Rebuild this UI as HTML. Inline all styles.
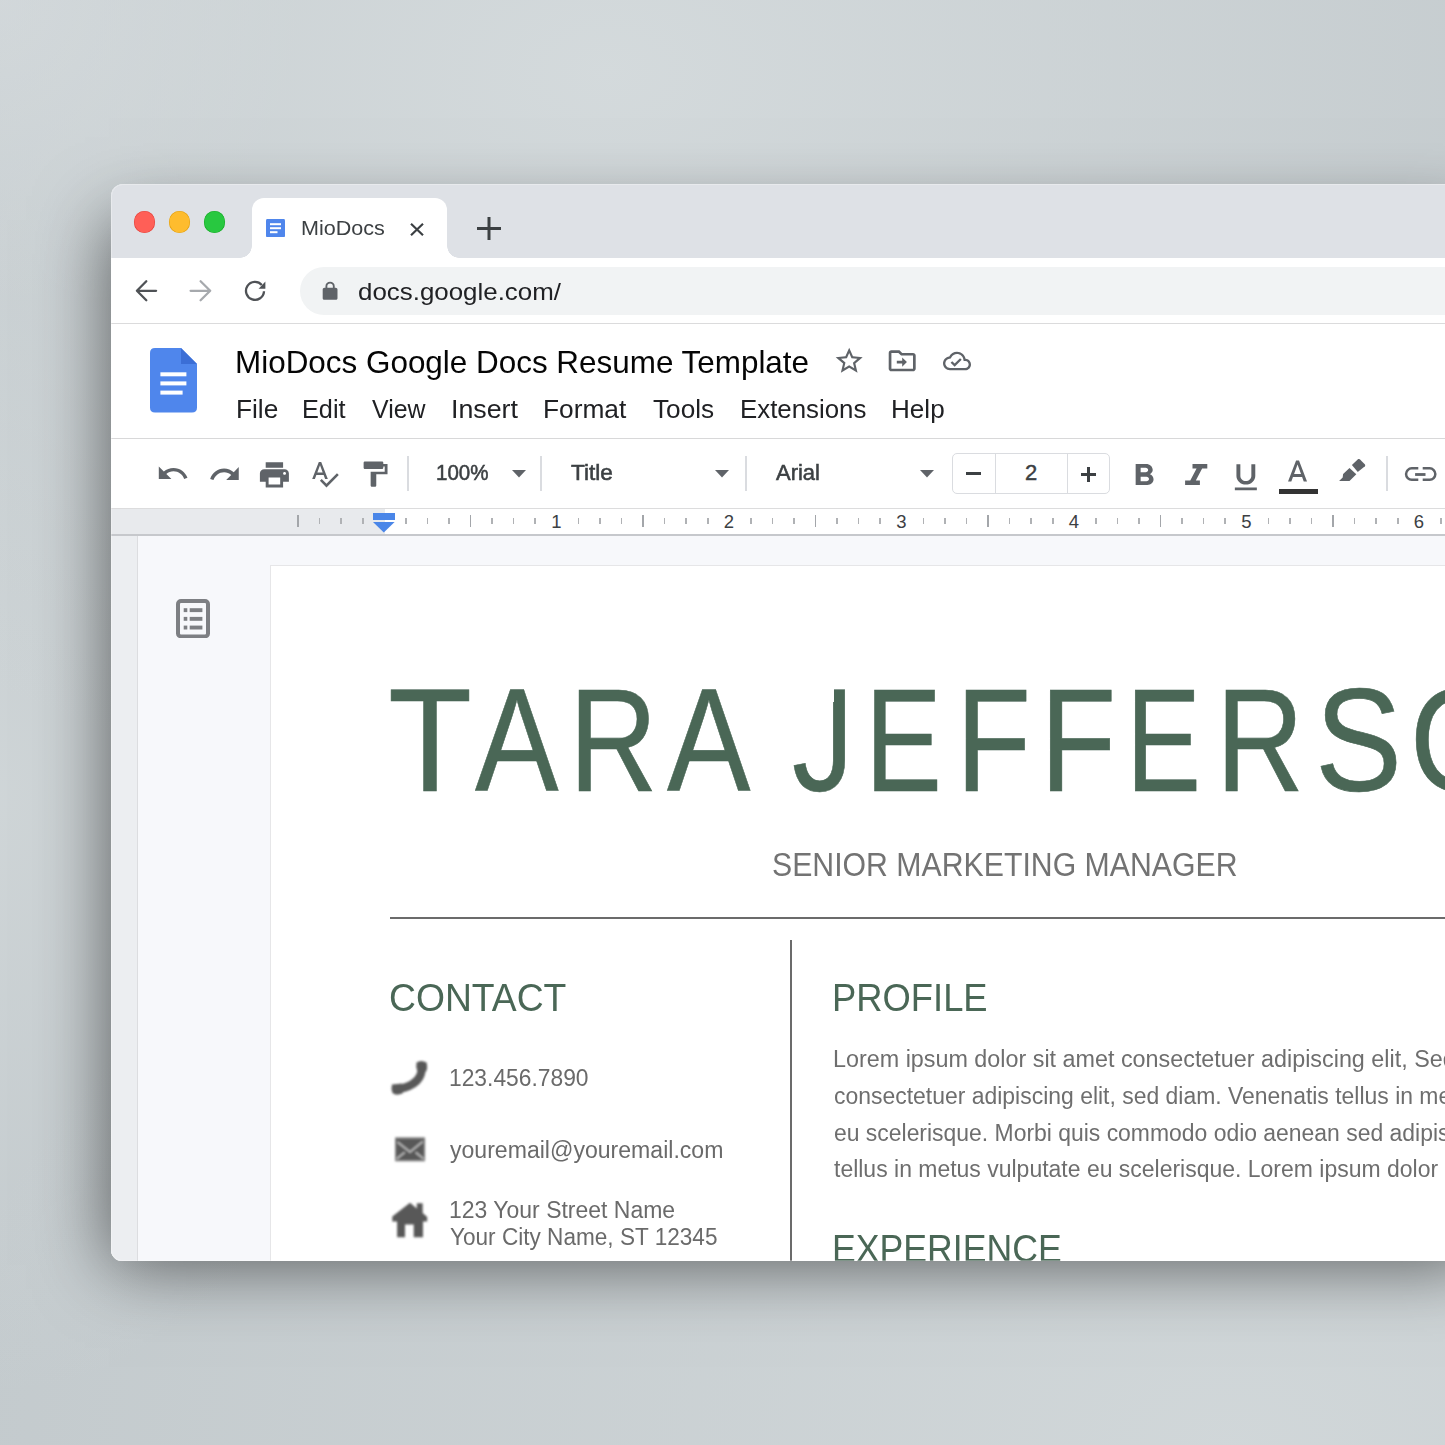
<!DOCTYPE html>
<html><head><meta charset="utf-8"><style>
html,body{margin:0;padding:0;}
body{width:1445px;height:1445px;overflow:hidden;position:relative;font-family:"Liberation Sans", sans-serif;
background:
 radial-gradient(ellipse 1100px 750px at 42% 5%, rgba(214,220,222,0.88), rgba(214,220,222,0) 100%),
 radial-gradient(ellipse 300px 300px at 0% 0%, rgba(212,217,220,0.7), rgba(212,217,220,0) 100%),
 radial-gradient(ellipse 1300px 800px at 85% 100%, rgba(211,217,219,0.85), rgba(211,217,219,0) 100%),
 radial-gradient(ellipse 400px 600px at 0% 55%, rgba(210,216,218,0.8), rgba(210,216,218,0) 100%),
 #c3cacd;}
#win{position:absolute;left:111px;top:184px;width:1400px;height:1077px;border-radius:12px 0 0 11px;overflow:hidden;background:#fff;
box-shadow:-18px 20px 68px -16px rgba(0,0,0,0.56);}
</style></head><body>
<div id="win">
<div style="position:absolute;left:0.00px;top:0.00px;width:1354.00px;height:73.50px;background:#dee1e6;"></div>
<div style="position:absolute;left:22.90px;top:27.40px;width:21.2px;height:21.2px;border-radius:50%;background:#ff5f57;box-shadow:inset 0 0 0 0.6px #e2463f;"></div>
<div style="position:absolute;left:57.90px;top:27.40px;width:21.2px;height:21.2px;border-radius:50%;background:#febc2e;box-shadow:inset 0 0 0 0.6px #e1a116;"></div>
<div style="position:absolute;left:92.90px;top:27.40px;width:21.2px;height:21.2px;border-radius:50%;background:#28c840;box-shadow:inset 0 0 0 0.6px #1aab29;"></div>
<div style="position:absolute;left:140.60px;top:14.00px;width:195.40px;height:60.00px;background:#fff;border-radius:12px 12px 0 0;"></div>
<div style="position:absolute;left:128.6px;top:61.5px;width:12px;height:12px;background:radial-gradient(circle at 0 0, transparent 11.5px, #fff 12px);"></div>
<div style="position:absolute;left:336px;top:61.5px;width:12px;height:12px;background:radial-gradient(circle at 100% 0, transparent 11.5px, #fff 12px);"></div>
<svg style="position:absolute;left:154.60px;top:34.70px;" width="19.00" height="18.30" viewBox="0 0 19 18.3"><rect x="0" y="0" width="19" height="18.3" rx="1.5" fill="#4f86ec"/><rect x="4" y="4.2" width="11" height="2" fill="#fff"/><rect x="4" y="8.2" width="11" height="2" fill="#fff"/><rect x="4" y="12.2" width="7.5" height="2" fill="#fff"/></svg>
<div style="position:absolute;left:189.52px;top:34.27px;font-size:20px;line-height:20px;font-weight:400;color:#3c4043;white-space:nowrap;transform:scaleX(1.0782);transform-origin:0 0;">MioDocs</div>
<svg style="position:absolute;left:299.00px;top:38.50px;" width="14.00" height="13.00" viewBox="0 0 14 13"><path d="M1 0.8 L13 12.2 M13 0.8 L1 12.2" stroke="#3c4043" stroke-width="2.2"/></svg>
<svg style="position:absolute;left:366.00px;top:33.00px;" width="24.00" height="23.00" viewBox="0 0 24 23"><path d="M12 0 V23 M0 11.5 H24" stroke="#3c4043" stroke-width="3"/></svg>
<div style="position:absolute;left:0.00px;top:73.50px;width:1354.00px;height:65.50px;background:#fff;"></div>
<div style="position:absolute;left:0.00px;top:138.80px;width:1354.00px;height:1.50px;background:#dbdbdc;"></div>
<div style="position:absolute;left:189.00px;top:83.00px;width:1200.00px;height:48.00px;background:#f1f3f4;border-radius:24px;"></div>
<svg style="position:absolute;left:14.00px;top:86.00px;" width="150.00" height="42.00" viewBox="125 270 150 42"><path d="M156.1 290.8 H137.2 M146.3 281.2 L136.9 290.8 L146.3 300.3" stroke="#4f5256" stroke-width="2.3" fill="none" stroke-linecap="round" stroke-linejoin="round"/><path d="M190.6 290.8 H209.8 M200.6 281.2 L210.2 290.8 L200.6 300.3" stroke="#a6a9ad" stroke-width="2.3" fill="none" stroke-linecap="round" stroke-linejoin="round"/><path d="M261.8 285.0 A9 9 0 1 0 264 291.3" stroke="#4f5256" stroke-width="2.3" fill="none"/><path d="M258.6 288.8 L265.4 288.8 L265.4 281.6 Z" fill="#4f5256"/></svg>
<svg style="position:absolute;left:207.50px;top:96.84px" width="22.20" height="20.57" viewBox="0 0 24 24" preserveAspectRatio="none"><path fill="#5f6368" d="M18 8h-1V6c0-2.76-2.24-5-5-5S7 3.24 7 6v2H6c-1.1 0-2 .9-2 2v10c0 1.1.9 2 2 2h12c1.1 0 2-.9 2-2V10c0-1.1-.9-2-2-2zM9 6c0-1.66 1.34-3 3-3s3 1.34 3 3v2H9V6z"/></svg>
<div style="position:absolute;left:246.84px;top:95.66px;font-size:24.5px;line-height:24.5px;font-weight:400;color:#202124;white-space:nowrap;transform:scaleX(1.0569);transform-origin:0 0;">docs.google.com/</div>
<div style="position:absolute;left:0.00px;top:140.30px;width:1354.00px;height:113.70px;background:#fff;"></div>
<div style="position:absolute;left:0.00px;top:254.00px;width:1354.00px;height:1.20px;background:#d8d8d9;"></div>
<svg style="position:absolute;left:39.00px;top:164.00px;" width="47.00" height="64.50" viewBox="0 0 47 64.5"><path d="M5 0 H31 L47 16 V59.5 Q47 64.5 42 64.5 H5 Q0 64.5 0 59.5 V5 Q0 0 5 0Z" fill="#4f86ec"/><path d="M31 0 L47 16 H31Z" fill="#3b6ed6"/><rect x="10.4" y="24.3" width="26" height="4" fill="#fff"/><rect x="10.4" y="33.4" width="26" height="4" fill="#fff"/><rect x="10.4" y="42.6" width="22.2" height="4" fill="#fff"/></svg>
<div style="position:absolute;left:123.79px;top:162.50px;font-size:31.3px;line-height:31.3px;font-weight:400;color:#050505;white-space:nowrap;transform:scaleX(1.0041);transform-origin:0 0;">MioDocs Google Docs Resume Template</div>
<svg style="position:absolute;left:722.30px;top:161.37px" width="32.40" height="31.58" viewBox="0 0 24 24" preserveAspectRatio="none"><path fill="#5f6368" d="M22 9.24l-7.19-.62L12 2 9.19 8.63 2 9.24l5.46 4.73L5.82 21 12 17.27 18.18 21l-1.63-7.03L22 9.24zM12 15.4l-3.76 2.27 1-4.28-3.32-2.88 4.38-.38L12 6.1l1.71 4.04 4.38.38-3.32 2.88 1 4.28L12 15.4z"/></svg>
<svg style="position:absolute;left:775.30px;top:160.75px" width="32.40" height="31.50" viewBox="0 0 24 24" preserveAspectRatio="none"><path fill="#5f6368" d="M20 6h-8l-2-2H4c-1.1 0-1.99.9-1.99 2L2 18c0 1.1.9 2 2 2h16c1.1 0 2-.9 2-2V8c0-1.1-.9-2-2-2zm0 12H4V6h5.17l2 2H20v10zM12 14H8v-2h4V9.5l3.5 3.5-3.5 3.5z"/></svg>
<svg style="position:absolute;left:832.00px;top:162.93px" width="28.00" height="28.05" viewBox="0 0 24 24" preserveAspectRatio="none"><path fill="#5f6368" d="M19.35 10.04C18.67 6.59 15.64 4 12 4 9.11 4 6.6 5.64 5.35 8.04 2.34 8.36 0 10.91 0 14c0 3.31 2.69 6 6 6h13c2.76 0 5-2.24 5-5 0-2.64-2.05-4.78-4.65-4.96zM19 18H6c-2.21 0-4-1.79-4-4 0-2.05 1.53-3.76 3.56-3.97l1.07-.11.5-.95C8.08 7.14 9.94 6 12 6c2.62 0 4.88 1.86 5.39 4.43l.3 1.5 1.53.11c1.56.1 2.78 1.41 2.78 2.96 0 1.65-1.35 3-3 3zm-9-3.82l-2.09-2.09L6.5 13.5 10 17l6.01-6.01-1.41-1.41z"/></svg>
<div style="position:absolute;left:124.53px;top:212.58px;font-size:25.3px;line-height:25.3px;font-weight:400;color:#202124;white-space:nowrap;transform:scaleX(1.0373);transform-origin:0 0;">File</div>
<div style="position:absolute;left:190.50px;top:212.58px;font-size:25.3px;line-height:25.3px;font-weight:400;color:#202124;white-space:nowrap;transform:scaleX(0.9985);transform-origin:0 0;">Edit</div>
<div style="position:absolute;left:260.80px;top:212.58px;font-size:25.3px;line-height:25.3px;font-weight:400;color:#202124;white-space:nowrap;transform:scaleX(0.9836);transform-origin:0 0;">View</div>
<div style="position:absolute;left:340.08px;top:212.58px;font-size:25.3px;line-height:25.3px;font-weight:400;color:#202124;white-space:nowrap;transform:scaleX(1.0582);transform-origin:0 0;">Insert</div>
<div style="position:absolute;left:431.72px;top:212.58px;font-size:25.3px;line-height:25.3px;font-weight:400;color:#202124;white-space:nowrap;transform:scaleX(1.0399);transform-origin:0 0;">Format</div>
<div style="position:absolute;left:542.00px;top:212.58px;font-size:25.3px;line-height:25.3px;font-weight:400;color:#202124;white-space:nowrap;transform:scaleX(1.0359);transform-origin:0 0;">Tools</div>
<div style="position:absolute;left:628.56px;top:212.58px;font-size:25.3px;line-height:25.3px;font-weight:400;color:#202124;white-space:nowrap;transform:scaleX(1.0215);transform-origin:0 0;">Extensions</div>
<div style="position:absolute;left:779.64px;top:212.58px;font-size:25.3px;line-height:25.3px;font-weight:400;color:#202124;white-space:nowrap;transform:scaleX(1.0315);transform-origin:0 0;">Help</div>
<div style="position:absolute;left:0.00px;top:255.20px;width:1354.00px;height:68.30px;background:#fff;"></div>
<div style="position:absolute;left:0.00px;top:323.80px;width:1354.00px;height:1.20px;background:#dcdcdd;"></div>
<svg style="position:absolute;left:45.00px;top:273.42px" width="33.60" height="32.84" viewBox="0 0 24 24" preserveAspectRatio="none"><path fill="#5f6368" d="M12.5 8c-2.65 0-5.05.99-6.9 2.6L2 7v9h9l-3.62-3.62c1.39-1.16 3.16-1.88 5.12-1.88 3.54 0 6.55 2.31 7.6 5.5l2.37-.78C21.08 11.03 17.15 8 12.5 8z"/></svg>
<svg style="position:absolute;left:96.65px;top:272.89px" width="33.55" height="34.67" viewBox="0 0 24 24" preserveAspectRatio="none"><path fill="#5f6368" d="M18.4 10.6C16.55 8.99 14.15 8 11.5 8c-4.65 0-8.58 3.03-9.96 7.22L3.9 16c1.05-3.19 4.05-5.5 7.6-5.5 1.95 0 3.73.72 5.12 1.88L13 16h9V7l-3.6 3.6z"/></svg>
<svg style="position:absolute;left:145.90px;top:273.50px" width="34.80" height="33.60" viewBox="0 0 24 24" preserveAspectRatio="none"><path fill="#5f6368" d="M19 8H5c-1.66 0-3 1.34-3 3v6h4v4h12v-4h4v-6c0-1.66-1.34-3-3-3zm-3 11H8v-5h8v5zm3-7c-.55 0-1-.45-1-1s.45-1 1-1 1 .45 1 1-.45 1-1 1zm-1-9H6v4h12V3z"/></svg>
<svg style="position:absolute;left:197.81px;top:274.08px" width="31.08" height="31.38" viewBox="0 0 24 24" preserveAspectRatio="none"><path fill="#5f6368" d="M12.45 16h2.09L9.43 3H7.57L2.46 16h2.09l1.12-3h5.64l1.14 3zm-6.02-5L8.5 5.48 10.57 11H6.43zm15.16.59l-8.09 8.09L9.83 16l-1.41 1.41 5.09 5.09L23 13l-1.41-1.41z"/></svg>
<svg style="position:absolute;left:247.18px;top:275.17px" width="33.74" height="30.36" viewBox="0 0 24 24" preserveAspectRatio="none"><path fill="#5f6368" d="M18 4V3c0-.55-.45-1-1-1H5c-.55 0-1 .45-1 1v4c0 .55.45 1 1 1h12c.55 0 1-.45 1-1V6h1v4H9v11c0 .55.45 1 1 1h2c.55 0 1-.45 1-1v-9h8V4h-3z"/></svg>
<div style="position:absolute;left:296.40px;top:272.00px;width:1.50px;height:35.00px;background:#dadce0;"></div>
<div style="position:absolute;left:429.40px;top:272.00px;width:1.50px;height:35.00px;background:#dadce0;"></div>
<div style="position:absolute;left:634.40px;top:272.00px;width:1.50px;height:35.00px;background:#dadce0;"></div>
<div style="position:absolute;left:1275.40px;top:272.00px;width:1.50px;height:35.00px;background:#dadce0;"></div>
<div style="position:absolute;left:325.07px;top:277.78px;font-size:22px;line-height:22px;font-weight:400;color:#3c4043;white-space:nowrap;transform:scaleX(0.9323);transform-origin:0 0;-webkit-text-stroke:0.55px #3c4043;">100%</div>
<div style="position:absolute;left:460.40px;top:277.78px;font-size:22px;line-height:22px;font-weight:400;color:#3c4043;white-space:nowrap;transform:scaleX(1.0269);transform-origin:0 0;-webkit-text-stroke:0.55px #3c4043;">Title</div>
<div style="position:absolute;left:665.00px;top:277.78px;font-size:22px;line-height:22px;font-weight:400;color:#3c4043;white-space:nowrap;transform:scaleX(0.9971);transform-origin:0 0;-webkit-text-stroke:0.55px #3c4043;">Arial</div>
<svg style="position:absolute;left:400.60px;top:286.40px;" width="14.00" height="7.50" viewBox="0 0 14 7.5"><path d="M0 0 H14 L7 7.5Z" fill="#5f6368"/></svg>
<svg style="position:absolute;left:604.00px;top:286.40px;" width="14.00" height="7.50" viewBox="0 0 14 7.5"><path d="M0 0 H14 L7 7.5Z" fill="#5f6368"/></svg>
<svg style="position:absolute;left:809.00px;top:286.40px;" width="14.00" height="7.50" viewBox="0 0 14 7.5"><path d="M0 0 H14 L7 7.5Z" fill="#5f6368"/></svg>
<div style="position:absolute;left:841.00px;top:268.50px;width:158.00px;height:41.50px;border:1.3px solid #dadce0;border-radius:5px;box-sizing:border-box;"></div>
<div style="position:absolute;left:884.00px;top:268.50px;width:1.30px;height:41.50px;background:#dadce0;"></div>
<div style="position:absolute;left:956.00px;top:268.50px;width:1.30px;height:41.50px;background:#dadce0;"></div>
<div style="position:absolute;left:855.00px;top:288.20px;width:15.00px;height:3.00px;background:#3c4043;"></div>
<svg style="position:absolute;left:970.00px;top:282.50px;" width="15.00" height="15.00" viewBox="0 0 15 15"><path d="M7.5 0 V15 M0 7.5 H15" stroke="#3c4043" stroke-width="3"/></svg>
<div style="position:absolute;left:914.00px;top:277.78px;font-size:22px;line-height:22px;font-weight:400;color:#3c4043;white-space:nowrap;-webkit-text-stroke:0.45px #3c4043;">2</div>
<svg style="position:absolute;left:1013.14px;top:273.90px" width="39.96" height="36.00" viewBox="0 0 24 24" preserveAspectRatio="none"><path fill="#5f6368" d="M15.6 10.79c.97-.67 1.65-1.77 1.65-2.79 0-2.26-1.75-4-4-4H7v14h7.04c2.09 0 3.71-1.7 3.71-3.79 0-1.52-.86-2.82-2.15-3.42zM10 6.5h3c.83 0 1.5.67 1.5 1.5s-.67 1.5-1.5 1.5h-3v-3zm3.5 9H10v-3h3.5c.83 0 1.5.67 1.5 1.5s-.67 1.5-1.5 1.5z"/></svg>
<svg style="position:absolute;left:1062.70px;top:273.90px" width="44.40" height="36.00" viewBox="0 0 24 24" preserveAspectRatio="none"><path fill="#5f6368" d="M10 4v3h2.21l-3.42 8H6v3h8v-3h-2.21l3.42-8H18V4z"/></svg>
<svg style="position:absolute;left:1116.14px;top:275.67px" width="37.71" height="34.67" viewBox="0 0 24 24" preserveAspectRatio="none"><path fill="#5f6368" d="M12 17c3.31 0 6-2.69 6-6V3h-2.5v8c0 1.93-1.57 3.5-3.5 3.5S8.5 12.93 8.5 11V3H6v8c0 3.31 2.69 6 6 6zm-7 2v2h14v-2H5z"/></svg>
<svg style="position:absolute;left:1168.96px;top:271.50px" width="35.08" height="36.00" viewBox="0 0 24 24" preserveAspectRatio="none"><path fill="#5f6368" d="M11 3L5.5 17h2.25l1.12-3h6.25l1.12 3h2.25L13 3h-2zm-1.38 9L12 5.67 14.38 12H9.62z"/></svg>
<div style="position:absolute;left:1167.60px;top:304.50px;width:39.20px;height:5.90px;background:#333;"></div>
<svg style="position:absolute;left:1219.00px;top:266.00px;" width="40.00" height="40.00" viewBox="1330 450 40 40"><path d="M1358.2 459.1 Q1359 458.6 1359.8 459.3 L1365 464.6 Q1365.6 465.5 1364.9 466.3 L1357.8 471.9 L1351.9 465.1 Z" fill="#5f6368"/><path d="M1349.5 467.9 L1356.3 474.3 L1349.5 481 L1339.1 481 L1342.7 477.4 L1343.1 473.9 Z" fill="#5f6368"/></svg>
<svg style="position:absolute;left:1284.00px;top:271.00px;" width="50.00" height="35.00" viewBox="1395 455 50 35"><path d="M1418.3 468.35 H1411.75 A5.7 5.7 0 0 0 1411.75 479.75 H1418.3 M1422.7 468.35 H1429.65 A5.7 5.7 0 0 1 1429.65 479.75 H1422.7" stroke="#5f6368" stroke-width="2.5" fill="none"/><rect x="1415.1" y="473.1" width="10.4" height="2.8" fill="#5f6368"/></svg>
<div style="position:absolute;left:0.00px;top:324.50px;width:1354.00px;height:25.50px;background:#fff;"></div>
<div style="position:absolute;left:0.00px;top:324.50px;width:274.00px;height:25.50px;background:#e8eaed;"></div>
<div style="position:absolute;left:0.00px;top:350.00px;width:1354.00px;height:1.60px;background:#c6c8cc;"></div>
<div style="position:absolute;left:186.25px;top:330.50px;width:1.60px;height:12.50px;background:#a3a6aa;"></div>
<div style="position:absolute;left:207.81px;top:334.00px;width:1.60px;height:6.00px;background:#b0b2b5;"></div>
<div style="position:absolute;left:229.38px;top:334.00px;width:1.60px;height:6.00px;background:#b0b2b5;"></div>
<div style="position:absolute;left:250.94px;top:334.00px;width:1.60px;height:6.00px;background:#b0b2b5;"></div>
<div style="position:absolute;left:294.06px;top:334.00px;width:1.60px;height:6.00px;background:#b0b2b5;"></div>
<div style="position:absolute;left:315.62px;top:334.00px;width:1.60px;height:6.00px;background:#b0b2b5;"></div>
<div style="position:absolute;left:337.19px;top:334.00px;width:1.60px;height:6.00px;background:#b0b2b5;"></div>
<div style="position:absolute;left:358.75px;top:330.50px;width:1.60px;height:12.50px;background:#a3a6aa;"></div>
<div style="position:absolute;left:380.31px;top:334.00px;width:1.60px;height:6.00px;background:#b0b2b5;"></div>
<div style="position:absolute;left:401.88px;top:334.00px;width:1.60px;height:6.00px;background:#b0b2b5;"></div>
<div style="position:absolute;left:423.44px;top:334.00px;width:1.60px;height:6.00px;background:#b0b2b5;"></div>
<div style="position:absolute;left:466.56px;top:334.00px;width:1.60px;height:6.00px;background:#b0b2b5;"></div>
<div style="position:absolute;left:488.12px;top:334.00px;width:1.60px;height:6.00px;background:#b0b2b5;"></div>
<div style="position:absolute;left:509.69px;top:334.00px;width:1.60px;height:6.00px;background:#b0b2b5;"></div>
<div style="position:absolute;left:531.25px;top:330.50px;width:1.60px;height:12.50px;background:#a3a6aa;"></div>
<div style="position:absolute;left:552.81px;top:334.00px;width:1.60px;height:6.00px;background:#b0b2b5;"></div>
<div style="position:absolute;left:574.38px;top:334.00px;width:1.60px;height:6.00px;background:#b0b2b5;"></div>
<div style="position:absolute;left:595.94px;top:334.00px;width:1.60px;height:6.00px;background:#b0b2b5;"></div>
<div style="position:absolute;left:639.06px;top:334.00px;width:1.60px;height:6.00px;background:#b0b2b5;"></div>
<div style="position:absolute;left:660.62px;top:334.00px;width:1.60px;height:6.00px;background:#b0b2b5;"></div>
<div style="position:absolute;left:682.19px;top:334.00px;width:1.60px;height:6.00px;background:#b0b2b5;"></div>
<div style="position:absolute;left:703.75px;top:330.50px;width:1.60px;height:12.50px;background:#a3a6aa;"></div>
<div style="position:absolute;left:725.31px;top:334.00px;width:1.60px;height:6.00px;background:#b0b2b5;"></div>
<div style="position:absolute;left:746.88px;top:334.00px;width:1.60px;height:6.00px;background:#b0b2b5;"></div>
<div style="position:absolute;left:768.44px;top:334.00px;width:1.60px;height:6.00px;background:#b0b2b5;"></div>
<div style="position:absolute;left:811.56px;top:334.00px;width:1.60px;height:6.00px;background:#b0b2b5;"></div>
<div style="position:absolute;left:833.12px;top:334.00px;width:1.60px;height:6.00px;background:#b0b2b5;"></div>
<div style="position:absolute;left:854.69px;top:334.00px;width:1.60px;height:6.00px;background:#b0b2b5;"></div>
<div style="position:absolute;left:876.25px;top:330.50px;width:1.60px;height:12.50px;background:#a3a6aa;"></div>
<div style="position:absolute;left:897.81px;top:334.00px;width:1.60px;height:6.00px;background:#b0b2b5;"></div>
<div style="position:absolute;left:919.38px;top:334.00px;width:1.60px;height:6.00px;background:#b0b2b5;"></div>
<div style="position:absolute;left:940.94px;top:334.00px;width:1.60px;height:6.00px;background:#b0b2b5;"></div>
<div style="position:absolute;left:984.06px;top:334.00px;width:1.60px;height:6.00px;background:#b0b2b5;"></div>
<div style="position:absolute;left:1005.62px;top:334.00px;width:1.60px;height:6.00px;background:#b0b2b5;"></div>
<div style="position:absolute;left:1027.19px;top:334.00px;width:1.60px;height:6.00px;background:#b0b2b5;"></div>
<div style="position:absolute;left:1048.75px;top:330.50px;width:1.60px;height:12.50px;background:#a3a6aa;"></div>
<div style="position:absolute;left:1070.31px;top:334.00px;width:1.60px;height:6.00px;background:#b0b2b5;"></div>
<div style="position:absolute;left:1091.88px;top:334.00px;width:1.60px;height:6.00px;background:#b0b2b5;"></div>
<div style="position:absolute;left:1113.44px;top:334.00px;width:1.60px;height:6.00px;background:#b0b2b5;"></div>
<div style="position:absolute;left:1156.56px;top:334.00px;width:1.60px;height:6.00px;background:#b0b2b5;"></div>
<div style="position:absolute;left:1178.12px;top:334.00px;width:1.60px;height:6.00px;background:#b0b2b5;"></div>
<div style="position:absolute;left:1199.69px;top:334.00px;width:1.60px;height:6.00px;background:#b0b2b5;"></div>
<div style="position:absolute;left:1221.25px;top:330.50px;width:1.60px;height:12.50px;background:#a3a6aa;"></div>
<div style="position:absolute;left:1242.81px;top:334.00px;width:1.60px;height:6.00px;background:#b0b2b5;"></div>
<div style="position:absolute;left:1264.38px;top:334.00px;width:1.60px;height:6.00px;background:#b0b2b5;"></div>
<div style="position:absolute;left:1285.94px;top:334.00px;width:1.60px;height:6.00px;background:#b0b2b5;"></div>
<div style="position:absolute;left:1329.06px;top:334.00px;width:1.60px;height:6.00px;background:#b0b2b5;"></div>
<div style="position:absolute;left:440.30px;top:328.84px;font-size:18.5px;line-height:18.5px;font-weight:400;color:#3c4043;white-space:nowrap;">1</div>
<div style="position:absolute;left:612.80px;top:328.84px;font-size:18.5px;line-height:18.5px;font-weight:400;color:#3c4043;white-space:nowrap;">2</div>
<div style="position:absolute;left:785.30px;top:328.84px;font-size:18.5px;line-height:18.5px;font-weight:400;color:#3c4043;white-space:nowrap;">3</div>
<div style="position:absolute;left:957.80px;top:328.84px;font-size:18.5px;line-height:18.5px;font-weight:400;color:#3c4043;white-space:nowrap;">4</div>
<div style="position:absolute;left:1130.30px;top:328.84px;font-size:18.5px;line-height:18.5px;font-weight:400;color:#3c4043;white-space:nowrap;">5</div>
<div style="position:absolute;left:1302.80px;top:328.84px;font-size:18.5px;line-height:18.5px;font-weight:400;color:#3c4043;white-space:nowrap;">6</div>
<div style="position:absolute;left:262.00px;top:329.00px;width:21.60px;height:6.50px;background:#4a86e8;"></div>
<svg style="position:absolute;left:262.00px;top:338.30px;" width="21.60" height="10.50" viewBox="0 0 21.6 10.5"><path d="M0 0 H21.6 L10.8 10.5Z" fill="#4a86e8"/></svg>
<div style="position:absolute;left:0.00px;top:351.60px;width:1354.00px;height:734.40px;background:#f7f8fb;"></div>
<div style="position:absolute;left:0.00px;top:351.60px;width:26.30px;height:734.40px;background:#eceef1;"></div>
<div style="position:absolute;left:26.30px;top:351.60px;width:1.00px;height:734.40px;background:#dcdde0;"></div>
<svg style="position:absolute;left:65.00px;top:414.80px;" width="34.00" height="39.40" viewBox="0 0 34 39.4"><rect x="2" y="2" width="30" height="35.4" rx="3" fill="none" stroke="#7d7f83" stroke-width="4"/><rect x="7.7" y="9.2" width="3.6" height="3.9" fill="#7d7f83"/><rect x="13.7" y="9.2" width="12.7" height="3.9" fill="#7d7f83"/><rect x="7.7" y="17.9" width="3.6" height="3.9" fill="#7d7f83"/><rect x="13.7" y="17.9" width="12.7" height="3.9" fill="#7d7f83"/><rect x="7.7" y="26.6" width="3.6" height="3.9" fill="#7d7f83"/><rect x="13.7" y="26.6" width="12.7" height="3.9" fill="#7d7f83"/></svg>
<div style="position:absolute;left:159.30px;top:380.50px;width:1229.70px;height:735.50px;background:#fff;border:1.4px solid #e6e6e8;box-sizing:border-box;"></div>
<div style="position:absolute;left:276.73px;top:483.29px;font-size:146.5px;line-height:146.5px;font-weight:400;color:#4a6756;white-space:nowrap;transform:scaleX(0.9393);transform-origin:0 0;-webkit-text-stroke:0.6px #4a6756;">T</div>
<div style="position:absolute;left:363.85px;top:483.29px;font-size:146.5px;line-height:146.5px;font-weight:400;color:#4a6756;white-space:nowrap;transform:scaleX(0.8551);transform-origin:0 0;-webkit-text-stroke:0.6px #4a6756;">A</div>
<div style="position:absolute;left:458.31px;top:483.29px;font-size:146.5px;line-height:146.5px;font-weight:400;color:#4a6756;white-space:nowrap;transform:scaleX(0.8368);transform-origin:0 0;-webkit-text-stroke:0.6px #4a6756;">R</div>
<div style="position:absolute;left:555.75px;top:483.29px;font-size:146.5px;line-height:146.5px;font-weight:400;color:#4a6756;white-space:nowrap;transform:scaleX(0.8541);transform-origin:0 0;-webkit-text-stroke:0.6px #4a6756;">A</div>
<div style="position:absolute;left:681.36px;top:483.29px;font-size:146.5px;line-height:146.5px;font-weight:400;color:#4a6756;white-space:nowrap;transform:scaleX(0.8459);transform-origin:0 0;-webkit-text-stroke:0.6px #4a6756;">J</div>
<div style="position:absolute;left:753.90px;top:483.29px;font-size:146.5px;line-height:146.5px;font-weight:400;color:#4a6756;white-space:nowrap;transform:scaleX(0.7875);transform-origin:0 0;-webkit-text-stroke:0.6px #4a6756;">E</div>
<div style="position:absolute;left:845.30px;top:483.29px;font-size:146.5px;line-height:146.5px;font-weight:400;color:#4a6756;white-space:nowrap;transform:scaleX(0.8375);transform-origin:0 0;-webkit-text-stroke:0.6px #4a6756;">F</div>
<div style="position:absolute;left:929.13px;top:483.29px;font-size:146.5px;line-height:146.5px;font-weight:400;color:#4a6756;white-space:nowrap;transform:scaleX(0.8514);transform-origin:0 0;-webkit-text-stroke:0.6px #4a6756;">F</div>
<div style="position:absolute;left:1015.15px;top:483.29px;font-size:146.5px;line-height:146.5px;font-weight:400;color:#4a6756;white-space:nowrap;transform:scaleX(0.7663);transform-origin:0 0;-webkit-text-stroke:0.6px #4a6756;">E</div>
<div style="position:absolute;left:1105.38px;top:483.29px;font-size:146.5px;line-height:146.5px;font-weight:400;color:#4a6756;white-space:nowrap;transform:scaleX(0.8310);transform-origin:0 0;-webkit-text-stroke:0.6px #4a6756;">R</div>
<div style="position:absolute;left:1203.50px;top:483.29px;font-size:146.5px;line-height:146.5px;font-weight:400;color:#4a6756;white-space:nowrap;transform:scaleX(0.8918);transform-origin:0 0;-webkit-text-stroke:0.6px #4a6756;">S</div>
<div style="position:absolute;left:1298.75px;top:483.29px;font-size:146.5px;line-height:146.5px;font-weight:400;color:#4a6756;white-space:nowrap;transform:scaleX(0.8842);transform-origin:0 0;-webkit-text-stroke:0.6px #4a6756;">O</div>
<div style="position:absolute;left:701.00px;top:502.00px;width:22.10px;height:16.00px;background:#fff;"></div>
<div style="position:absolute;left:661.00px;top:664.04px;font-size:33.5px;line-height:33.5px;font-weight:400;color:#737373;white-space:nowrap;transform:scaleX(0.9028);transform-origin:0 0;">SENIOR MARKETING MANAGER</div>
<div style="position:absolute;left:279.00px;top:733.00px;width:1075.00px;height:2.20px;background:#6b6b6b;"></div>
<div style="position:absolute;left:679.20px;top:756.00px;width:2.00px;height:330.00px;background:#6b6b6b;"></div>
<div style="position:absolute;left:277.53px;top:794.58px;font-size:38.3px;line-height:38.3px;font-weight:400;color:#4a6756;white-space:nowrap;transform:scaleX(0.9732);transform-origin:0 0;">CONTACT</div>
<div style="position:absolute;left:720.75px;top:794.88px;font-size:38.3px;line-height:38.3px;font-weight:400;color:#4a6756;white-space:nowrap;transform:scaleX(0.9497);transform-origin:0 0;">PROFILE</div>
<div style="position:absolute;left:337.83px;top:882.51px;font-size:23.5px;line-height:23.5px;font-weight:400;color:#6a6a6a;white-space:nowrap;transform:scaleX(0.9707);transform-origin:0 0;">123.456.7890</div>
<div style="position:absolute;left:338.80px;top:954.71px;font-size:23.5px;line-height:23.5px;font-weight:400;color:#6a6a6a;white-space:nowrap;transform:scaleX(0.9815);transform-origin:0 0;">youremail@youremail.com</div>
<div style="position:absolute;left:337.52px;top:1014.51px;font-size:23.5px;line-height:23.5px;font-weight:400;color:#6a6a6a;white-space:nowrap;transform:scaleX(0.9779);transform-origin:0 0;">123 Your Street Name</div>
<div style="position:absolute;left:338.50px;top:1041.91px;font-size:23.5px;line-height:23.5px;font-weight:400;color:#6a6a6a;white-space:nowrap;transform:scaleX(0.9613);transform-origin:0 0;">Your City Name, ST 12345</div>
<svg style="position:absolute;left:274px;top:866px" width="50" height="50" viewBox="385 1050 50 50"><defs><filter id="bl" x="-20%" y="-20%" width="140%" height="140%"><feGaussianBlur stdDeviation="0.9"/></filter></defs><g filter="url(#bl)" fill="#585858"><path d="M422 1066 Q422.5 1085 398 1089" stroke="#585858" stroke-width="8" fill="none"/><path d="M416.5 1062.5 Q421 1059.5 426.5 1062.5 Q428 1068 426 1071.5 L417.5 1071.5 Q415.5 1067 416.5 1062.5Z"/><path d="M392 1084.5 L402 1083.5 Q404.5 1088 402.5 1093.5 Q396 1096 392.5 1093 Q390.8 1088.5 392 1084.5Z"/></g></svg>
<svg style="position:absolute;left:274px;top:941px" width="50" height="50" viewBox="385 1125 50 50"><g filter="url(#bl)"><rect x="395" y="1137.5" width="30.1" height="23.8" rx="1" fill="#585858"/><rect x="395.8" y="1138.3" width="28.5" height="22.2" fill="none" stroke="#8a8a8a" stroke-width="1.2"/><path d="M397.5 1142 L410 1152 L422.8 1141.5 M396.5 1159 L404.8 1152.3 M423.8 1159 L415.6 1152.3" stroke="#b4b4b4" stroke-width="1.9" fill="none"/></g></svg>
<svg style="position:absolute;left:274px;top:1011px" width="50" height="50" viewBox="385 1195 50 50"><g filter="url(#bl)"><path fill="#585858" d="M410 1202.8 L392.3 1216.5 L392.3 1221.6 L397.1 1221.6 L397.1 1237.2 L405 1237.2 L405 1224.4 L413.7 1224.4 L413.7 1237.2 L423 1237.2 L423 1221.6 L427.2 1221.6 L427.2 1217 L422.7 1213 L422.7 1203.3 L416.8 1203.3 L416.8 1208.5 Z"/></g></svg>
<div style="position:absolute;left:721.69px;top:864.33px;font-size:23px;line-height:23px;font-weight:400;color:#6e6e6e;white-space:nowrap;transform:scaleX(1.0147);transform-origin:0 0;">Lorem ipsum dolor sit amet consectetuer adipiscing elit, Sed diam nonummy</div>
<div style="position:absolute;left:722.70px;top:901.03px;font-size:23px;line-height:23px;font-weight:400;color:#6e6e6e;white-space:nowrap;transform:scaleX(0.9975);transform-origin:0 0;">consectetuer adipiscing elit, sed diam. Venenatis tellus in metus vulputate</div>
<div style="position:absolute;left:722.70px;top:937.53px;font-size:23px;line-height:23px;font-weight:400;color:#6e6e6e;white-space:nowrap;transform:scaleX(0.9966);transform-origin:0 0;">eu scelerisque. Morbi quis commodo odio aenean sed adipiscing diam</div>
<div style="position:absolute;left:722.70px;top:974.03px;font-size:23px;line-height:23px;font-weight:400;color:#6e6e6e;white-space:nowrap;transform:scaleX(0.9990);transform-origin:0 0;">tellus in metus vulputate eu scelerisque. Lorem ipsum dolor sit amet</div>
<div style="position:absolute;left:721.31px;top:1045.88px;font-size:38.3px;line-height:38.3px;font-weight:400;color:#4a6756;white-space:nowrap;transform:scaleX(0.9310);transform-origin:0 0;">EXPERIENCE</div>
<div style="position:absolute;left:0;top:0;right:-20px;bottom:0;border:1.5px solid rgba(255,255,255,0.3);border-radius:12px 0 0 11px;"></div>
</div>
</body></html>
